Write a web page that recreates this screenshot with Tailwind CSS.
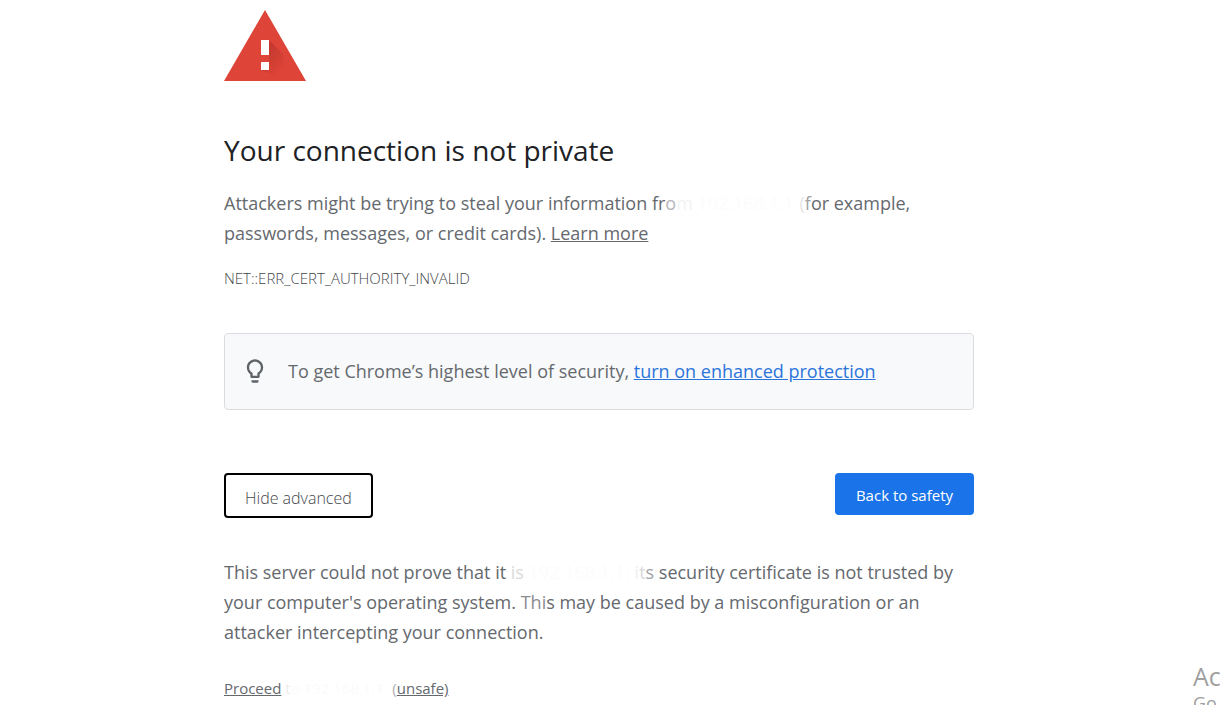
<!DOCTYPE html>
<html lang="en">
<head>
<meta charset="utf-8">
<meta name="viewport" content="width=device-width, initial-scale=1">
<title>Privacy error</title>
<script src="https://cdn.jsdelivr.net/npm/@tailwindcss/browser@4"></script>
</head>
<body class="relative min-h-screen overflow-hidden bg-white font-['Open_Sans','Noto_Sans',sans-serif] text-[18px] leading-[30px] text-[#65696e]">
<main class="ml-56 max-w-[750px] pt-[10px]">
  <svg class="h-[71px] w-[82px]" viewBox="0 0 82 71" aria-hidden="true">
    <defs><linearGradient id="shade" gradientUnits="userSpaceOnUse" x1="42" y1="40" x2="60" y2="58"><stop offset="0" stop-color="#b8342b"/><stop offset="1" stop-color="#de4437"/></linearGradient></defs>
    <path d="M41 0 82 71H0Z" fill="#de4437"/>
    <path d="M45 30 59 44 61 64 51 66 37 60 45 52Z" fill="url(#shade)" opacity=".7"/>
    <path d="M37 30h8v15h-8zM37 52h8v8h-8z" fill="#fff"/>
  </svg>
  <h1 class="mt-[50px] text-[28px] leading-[38px] text-[#202124]">Your connection is not private</h1>
  <p class="mt-[19px]">Attackers might be trying to steal your information fr<span class="text-[#b5b6b8]">o</span><span class="text-[#f3f3f3]">m</span> <span class="inline-block w-[102px] text-[#fcfcfc]">192.168.1.1</span><span class="text-[#e4e4e4]">(</span><span class="text-[#a0a2a4]">f</span>or example, passwords, messages, or credit cards). <a href="#" class="underline">Learn more</a></p>
  <p class="mt-[18px] text-[15px] leading-6 font-light text-[#45484c]">NET::ERR_CERT_AUTHORITY_INVALID</p>
  <section class="mt-[43px] flex items-center rounded border border-[#dadce0] bg-[#f8f9fa] pt-[22px] pb-[23px] pl-4">
    <svg class="mr-[19px] size-7 shrink-0" viewBox="0 0 24 24" fill="#5f6368" aria-hidden="true"><path d="M9 21c0 .5.4 1 1 1h4c.6 0 1-.5 1-1v-1H9v1zm3-19C8.100 2 5 5.100 5 9c0 2.400 1.200 4.500 3 5.700V17c0 .5.400 1 1 1h6c.6 0 1-.5 1-1v-2.300c1.800-1.300 3-3.400 3-5.700 0-3.900-3.100-7-7-7zm2.900 11.100l-.9.600V16h-4v-2.300l-.9-.6C7.800 12.200 7 10.600 7 9c0-2.800 2.200-5 5-5s5 2.200 5 5c0 1.600-.8 3.200-2.100 4.100z"/></svg>
    <p>To get Chrome’s highest level of security, <a href="#" class="text-[#2a74dc] underline">turn on enhanced protection</a></p>
  </section>
  <div class="mt-[63px] flex items-start justify-between leading-[22px]">
    <button type="button" class="rounded border-2 border-black bg-white px-[19px] pt-3 pb-[7px] text-[16px] font-light text-[#45484c]">Hide advanced</button>
    <button type="button" class="rounded bg-[#1a73e8] px-[21px] pt-[11px] pb-[9px] text-[15px] text-white">Back to safety</button>
  </div>
  <p class="mt-[39px]">This server could not prove that it <span class="text-[#dadada]">is</span> <span class="inline-block w-[106px] text-[#fcfcfc]">192.168.1.1;</span><span class="text-[#f0f0f0]">i</span><span class="text-[#dadada]">t</span><span class="text-[#a0a2a4]">s</span> security certificate is not trusted by your computer's operating system. <span class="text-[#8a8c90]">Thi</span>s may be caused by a misconfiguration or an attacker intercepting your connection.</p>
  <a href="#" class="mt-[26px] inline-block whitespace-nowrap text-[15px]"><span class="underline">Proceed</span> <span class="inline-block w-[107px] text-[#fbfbfb]"><span class="text-[#ececec]">t</span>o 192.168.1.1</span><span class="text-[#b0b1b3]">(</span><span class="underline">unsafe)</span></a>
</main>
<aside class="absolute top-[661px] right-0 w-[27px] overflow-hidden whitespace-nowrap text-[#a0a0a0]">
  <p class="text-[25px]">Ac</p>
  <p class="text-[18px] leading-6">Go</p>
</aside>
</body>
</html>
